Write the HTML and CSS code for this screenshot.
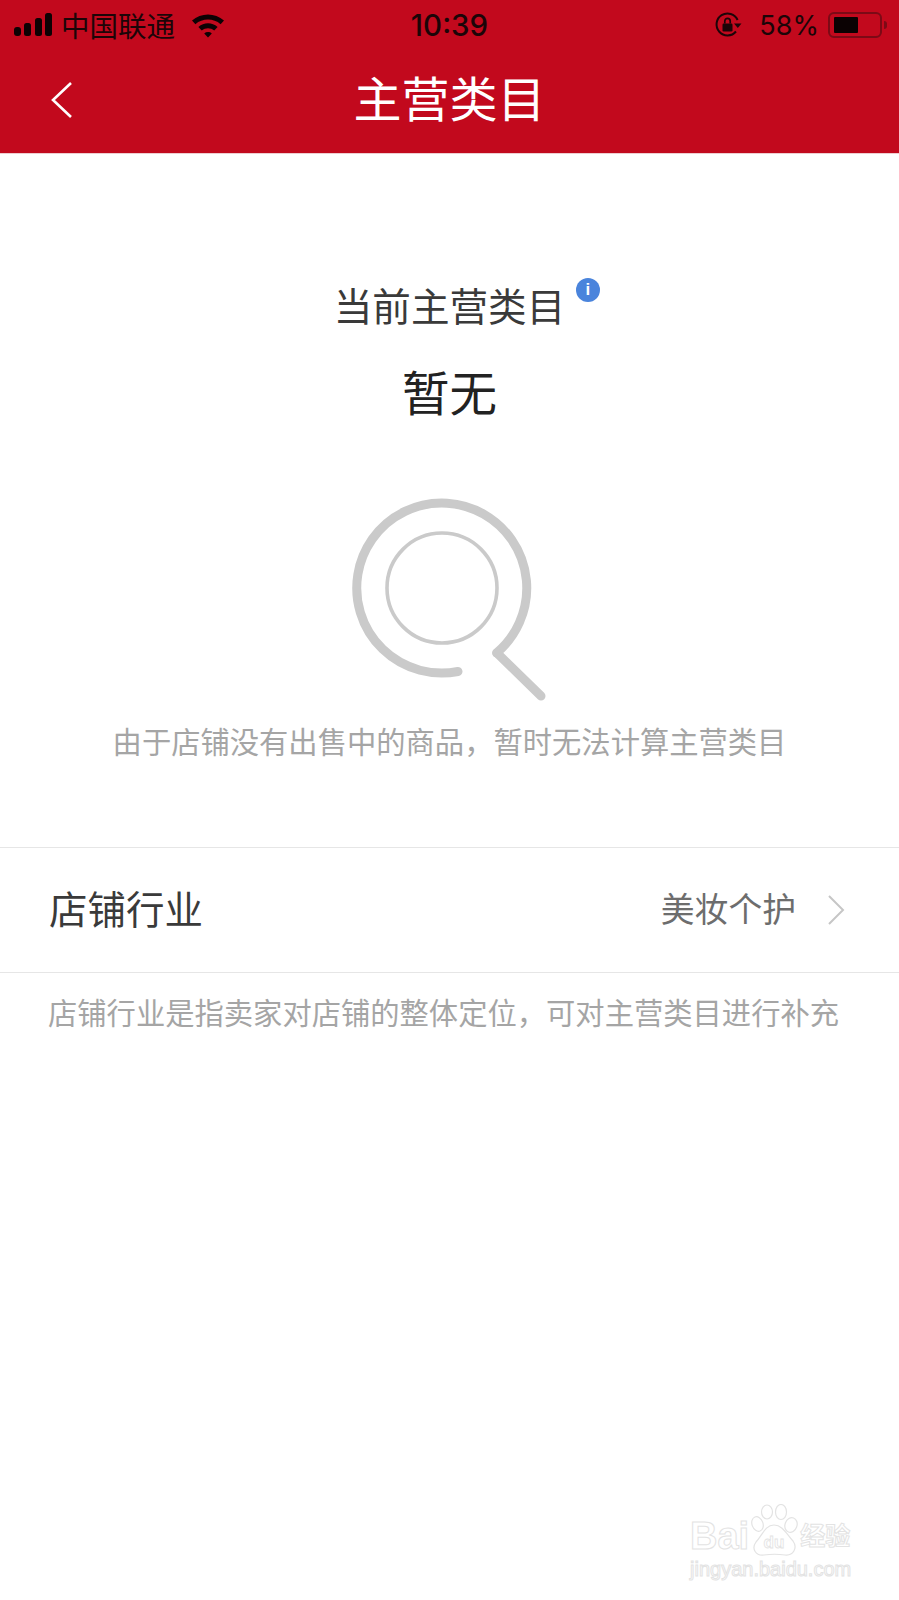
FILE: index.html
```html
<!DOCTYPE html>
<html lang="zh">
<head>
  <meta charset="UTF-8" />
  <title>主营类目</title>
  <link rel="stylesheet" href="styles.css">
</head>
<body>
  <div class="top">
    <div class="status-bar">
      <div class="status-left">
        <svg class="signal" width="39" height="24" viewBox="0 0 39 24">
          <rect x="0" y="14" width="7" height="9" rx="3" />
          <rect x="10" y="10" width="7" height="13" rx="2.5" />
          <rect x="21" y="5" width="7" height="18" rx="2.5" />
          <rect x="31" y="0" width="7" height="23" rx="2.5" />
        </svg>
        <span class="carrier">中国联通</span>
        <svg class="wifi" width="34" height="26" viewBox="0 0 34 26">
          <path d="M1 8.5C10 .5 24 .5 33 8.5L29.6 12.2C22.6 6 11.4 6 4.4 12.2Z" />
          <path d="M7.4 15C13 10 21 10 26.6 15L23.2 18.6C19.6 15.4 14.4 15.4 10.8 18.6Z" />
          <path d="M13.2 21.4C15.4 19.6 18.6 19.6 20.8 21.4L17 25.4Z" />
        </svg>
      </div>
      <div class="status-time">10:39</div>
      <div class="status-right">
        <svg class="lock" width="28" height="28" viewBox="0 0 28 28">
          <path d="M22 20.5A11 11 0 1 1 23.6 9" fill="none" stroke="#1c0508" stroke-width="2" />
          <path d="M20 12.5h7.5l-3.7 4.6Z" fill="#1c0508" />
          <rect x="8.5" y="12.5" width="10" height="8" rx="1.2" fill="#1c0508" />
          <path d="M10.8 12.5V10a2.7 2.7 0 0 1 5.4 0v2.5" fill="none" stroke="#1c0508" stroke-width="1.7" />
        </svg>
        <span class="battery-text">58%</span>
        <div class="battery">
          <div class="battery-level" style="width: 58%"></div>
        </div>
        <div class="battery-tip"></div>
      </div>
    </div>
    <div class="nav-bar">
      <svg class="back" width="24" height="38" viewBox="0 0 24 38">
        <path d="M21 2L3 19l18 17" fill="none" stroke="#fff" stroke-width="2.6" />
      </svg>
      <h1>主营类目</h1>
    </div>
  </div>

  <div class="current">
    <div class="current-label">当前主营类目<span class="info">i</span></div>
    <div class="current-value">暂无</div>
    <svg class="empty-icon" width="200" height="212" viewBox="0 0 200 212">
      <g fill="none" stroke="#cacaca" stroke-linecap="round">
        <circle cx="92" cy="99" r="55" stroke-width="3.6" />
        <path d="M108 182.5A85 85 0 1 1 146.6 164" stroke-width="9" />
        <path d="M147 164l44 43" stroke-width="9" />
      </g>
    </svg>
    <p class="current-desc">由于店铺没有出售中的商品，暂时无法计算主营类目</p>
  </div>

  <div class="row">
    <span class="row-title">店铺行业</span>
    <span class="row-value">美妆个护</span>
    <svg class="row-arrow" width="18" height="32" viewBox="0 0 18 32">
      <path d="M2 2l14 14L2 30" fill="none" stroke="#c6c6c6" stroke-width="2" />
    </svg>
  </div>
  <p class="hint">店铺行业是指卖家对店铺的整体定位，可对主营类目进行补充</p>

  <div class="watermark">
    <div class="wm-logo">
      <span class="wm-bai">Bai</span>
      <svg class="wm-paw" width="50" height="54" viewBox="0 0 50 54">
        <g fill="#fff" stroke="#e3e3e3" stroke-width="1.2">
          <ellipse cx="7.5" cy="20" rx="5.5" ry="7.5" transform="rotate(-20 7.5 20)" />
          <ellipse cx="17" cy="8" rx="5.5" ry="7" />
          <ellipse cx="31" cy="8" rx="5.5" ry="7.5" />
          <ellipse cx="41" cy="21" rx="6" ry="7.5" transform="rotate(20 41 21)" />
          <path d="M24 21C33 21 37 31 43 37C48 44 43 52 35 51C28 50 21 50 14 51C6 52 1 45 6 38C12 32 15 21 24 21Z" />
        </g>
        <text x="24" y="44" text-anchor="middle" class="wm-du">du</text>
      </svg>
      <span class="wm-cn">经验</span>
    </div>
    <div class="wm-url">jingyan.baidu.com</div>
  </div>
</body>
</html>
```

FILE: styles.css
```css
html, body {
  margin: 0;
  padding: 0;
}
body {
  position: relative;
  height: 1600px;
  overflow: hidden;
  background: #fff;
  font-family: "Noto Sans CJK SC", "Liberation Sans", sans-serif;
}
.top {
  height: 153px;
  background: #c2091d;
  border-bottom: 1px solid #eecdd0;
}
.status-bar {
  display: grid;
  grid-template-columns: 1fr auto 1fr;
  align-items: center;
  height: 50px;
  color: #1c0508;
}
.status-left {
  display: flex;
  align-items: center;
  padding-left: 14px;
}
.signal {
  fill: #0d0204;
}
.carrier {
  margin-left: 8px;
  font-size: 28.5px;
  line-height: 50px;
}
.wifi {
  margin-left: 16px;
  fill: #0d0204;
}
.status-time {
  font-family: Inter, "Liberation Sans", sans-serif;
  font-size: 29.5px;
  font-weight: 500;
  line-height: 50px;
}
.status-right {
  display: flex;
  align-items: center;
  justify-content: flex-end;
  padding-right: 12px;
}
.lock {
  margin-right: 17px;
}
.battery-text {
  font-family: Inter, "Liberation Sans", sans-serif;
  font-size: 27px;
  margin-right: 9px;
}
.battery {
  box-sizing: border-box;
  width: 54px;
  height: 26px;
  padding: 3px 4px;
  border: 2px solid #7c0a16;
  border-radius: 6px;
}
.battery-level {
  height: 100%;
  background: #0b0203;
  border-radius: 1px;
}
.battery-tip {
  width: 3px;
  height: 8px;
  margin-left: 2px;
  background: #7c0a16;
  border-radius: 0 3px 3px 0;
}
.nav-bar {
  position: relative;
  display: flex;
  align-items: center;
  justify-content: center;
  height: 103px;
}
.back {
  position: absolute;
  left: 50px;
  top: 31px;
}
h1 {
  margin: 0 0 12px;
  color: #fff;
  font-size: 48px;
  font-weight: 400;
  line-height: 60px;
}
.current {
  display: flex;
  flex-direction: column;
  align-items: center;
  padding-top: 125px;
  height: 693px;
  box-sizing: border-box;
}
.current-label {
  position: relative;
  color: #3a3a3a;
  font-size: 38.6px;
  line-height: 50px;
}
.info {
  position: absolute;
  left: 242px;
  top: -1px;
  width: 24px;
  height: 24px;
  border-radius: 50%;
  background: #4a84dc;
  color: #fff;
  font-family: "Liberation Sans", sans-serif;
  font-size: 17px;
  font-weight: 700;
  line-height: 24px;
  text-align: center;
}
.current-value {
  margin-top: 31px;
  color: #222;
  font-size: 47.5px;
  line-height: 62px;
}
.empty-icon {
  flex: none;
  margin-top: 67px;
}
.current-desc {
  margin: 19px 0 0;
  color: #a5a5a5;
  font-size: 29.3px;
  line-height: 40px;
  white-space: nowrap;
}
.row {
  display: flex;
  align-items: center;
  box-sizing: border-box;
  height: 126px;
  padding: 0 54px 0 49px;
  border-top: 1px solid #e6e6e6;
  border-bottom: 1px solid #e6e6e6;
}
.row-title {
  flex: 1;
  margin-bottom: 6px;
  color: #3a3a3a;
  font-size: 38.5px;
  line-height: 50px;
}
.row-value {
  margin-bottom: 4px;
  color: #6d6d6d;
  font-size: 33.8px;
  line-height: 50px;
}
.row-arrow {
  margin-left: 31px;
}
.hint {
  margin: 18px 0 0;
  padding-left: 48px;
  color: #a5a5a5;
  font-size: 29.3px;
  line-height: 40px;
  white-space: nowrap;
}
/* watermark in the corner, over the empty page */
.watermark {
  position: absolute;
  left: 690px;
  top: 1504px;
  width: 170px;
  color: transparent;
  -webkit-text-stroke: 1px #e3e3e3;
}
.wm-logo {
  display: flex;
  align-items: flex-end;
}
.wm-bai {
  font-family: "Liberation Sans", sans-serif;
  font-size: 38px;
  font-weight: 700;
  line-height: 44px;
}
.wm-paw {
  margin-left: 1px;
}
.wm-du {
  font-family: "Liberation Sans", sans-serif;
  font-size: 17px;
  font-weight: 700;
  fill: #fff;
  stroke: #e3e3e3;
  stroke-width: 0.8;
  -webkit-text-stroke: 0;
}
.wm-cn {
  margin-left: 0;
  margin-bottom: 2px;
  font-size: 25px;
  font-weight: 700;
  line-height: 44px;
}
.wm-url {
  margin-top: -2px;
  font-family: "Liberation Sans", sans-serif;
  font-size: 20px;
  line-height: 26px;
  white-space: nowrap;
}
```
